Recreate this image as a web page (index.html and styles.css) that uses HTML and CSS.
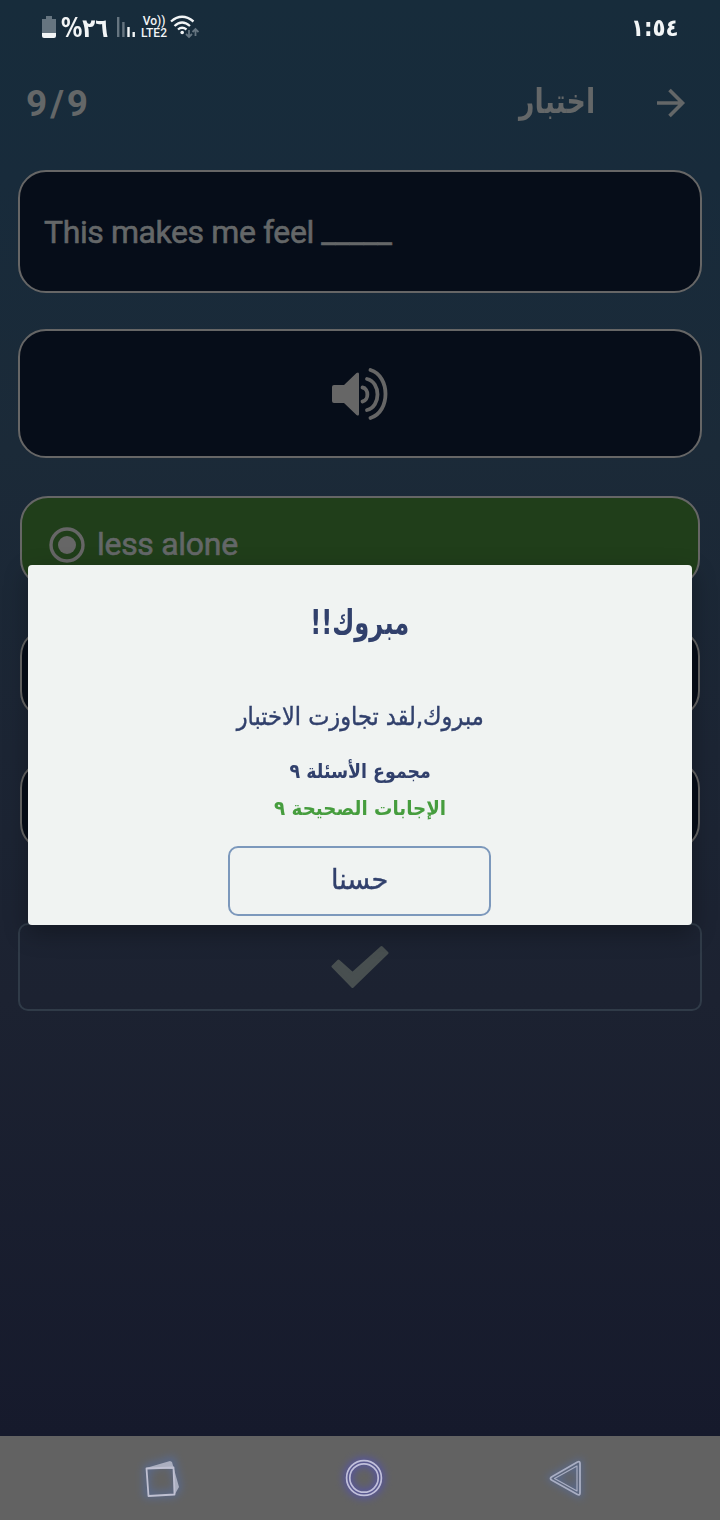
FILE: index.html
```html
<!DOCTYPE html>
<html lang="ar">
<head>
<meta charset="utf-8">
<title>اختبار</title>
<link rel="stylesheet" href="styles.css">
</head>
<body>
<div class="screen">
  <div class="status">
    <div class="status-left">
      <svg class="battery" width="14" height="22" viewBox="0 0 14 22"><path fill="#667580" d="M4 0h6v3h4v15H0V3h4z"/><path fill="#f2f5f6" d="M0 17h14v3q0 2-2 2H2q-2 0-2-2z"/></svg>
      <span class="percent"><span class="fit">%٢٦</span></span>
      <svg class="signal" width="19" height="21" viewBox="0 0 19 21"><path fill="#667580" d="M0 0h2.400v20H0zM5.200 5h2.400v15H5.200z"/><path fill="#f2f5f6" d="M10.300 10h2.400v10h-2.400zM15.500 15h2.400v5h-2.400z"/></svg>
      <span class="volte"><span>Vo))</span><span>LTE2</span></span>
      <svg class="wifi" width="29" height="24" viewBox="0 0 29 24"><g fill="none" stroke="#f2f5f6" stroke-width="2.300"><path d="M1 6.500Q12 -3 23.500 6.500"/><path d="M4.500 11Q12 4 20 11"/><path d="M8 14.500Q12 11 16.500 14.500"/></g><circle cx="12.200" cy="17.500" r="1.800" fill="#f2f5f6"/><path fill="none" stroke="#667580" stroke-width="1.800" d="M19 15v7M16 19l3 3 3-3M25.500 21v-7M22.500 17l3-3 3 3"/></svg>
    </div>
    <span class="time"><span class="fit">١:٥٤</span></span>
  </div>
  <div class="header">
    <span class="count">9/9</span>
    <span class="title"><span class="fit">اختبار</span></span>
    <svg class="arrow" width="30" height="30" viewBox="0 0 30 30"><path fill="none" stroke="#646768" stroke-width="3.600" d="M1 15h25M13.500 2l13 13-13 13"/></svg>
  </div>
  <div class="quiz">
    <div class="card question">This makes me feel _____</div>
    <div class="card sound">
      <svg width="56" height="52" viewBox="0 0 56 52"><path fill="#666" d="M2 17h10L24.500 5q2.500-1.500 2.500 1v40q0 2.500-2.500 1L12 35H2q-2 0-2-2V19q0-2 2-2z"/><g fill="none" stroke="#666" stroke-width="3.800" stroke-linecap="round"><path d="M30.500 19.500c6.500 1 6.500 13 0 14"/><path d="M35 11c14 3 14 28 0 31"/><path d="M38.500 2c20 6 20 42 0 48"/></g></svg>
    </div>
    <div class="options">
      <div class="option right">
        <svg width="36" height="36" viewBox="0 0 36 36"><circle cx="18" cy="18" r="16" fill="none" stroke="#666" stroke-width="3.400"/><circle cx="18" cy="18" r="9" fill="#666"/></svg>
        <span class="answer">less alone</span>
      </div>
      <div class="option"></div>
      <div class="option"></div>
    </div>
    <div class="submit">
      <svg width="58" height="44" viewBox="0 0 58 44"><path fill="#484f50" stroke="#484f50" stroke-width="3" stroke-linejoin="round" d="M2 21.500l5.500-5.500 14 12.500L50.500 2.500l5.500 5.500L21.500 41.500z"/></svg>
    </div>
  </div>
  <div class="nav">
    <svg class="recents" width="60" height="60" viewBox="0 0 60 60"><g class="glow"><path d="M17 20l25-8 6 27-4 7-27 1z"/></g><path fill="#aaaebf" d="M16 20l24-7 2 1 7 25-4 7-2-25z"/><path fill="none" stroke="#bfc0d2" stroke-width="1.800" stroke-linejoin="round" d="M16.500 20.500l27-1 1 27-26 1.500z"/></svg>
    <svg class="home" width="60" height="60" viewBox="0 0 60 60"><g class="glow home-glow"><circle cx="30" cy="30" r="16"/></g><g fill="none" stroke="#c0bfda"><circle cx="30" cy="30" r="17.400" stroke-width="1.700"/><circle cx="30" cy="30" r="14.200" stroke-width="1.700"/></g></svg>
    <svg class="back" width="60" height="60" viewBox="0 0 60 60"><g class="glow"><path d="M16 30l27-15v31z"/></g><g fill="none" stroke="#a9aec3" stroke-linejoin="round"><path stroke-width="1.800" d="M15.500 29q-2 1.500 0 3l26 14.500q2.500 1 2.500-1.500V15.500q0-2.500-2.500-1.500z"/><path stroke-width="1.200" d="M18.500 30.500L41 18v25z"/></g></svg>
  </div>
  <div class="dialog">
    <div class="d-title"><span class="fit" dir="rtl">مبروك!!</span></div>
    <div class="d-msg"><span class="fit" dir="rtl">مبروك,لقد تجاوزت الاختبار</span></div>
    <div class="d-total"><span class="fit" dir="rtl">مجموع الأسئلة ٩</span></div>
    <div class="d-correct"><span class="fit" dir="rtl">الإجابات الصحيحة ٩</span></div>
    <div class="d-ok"><span class="fit" dir="rtl">حسنا</span></div>
  </div>
</div>
</body>
</html>
```
FILE: styles.css
```css
* { box-sizing: border-box; }
body { margin: 0; }
svg { display: block; flex: none; }
.screen { position: relative; width: 720px; height: 1520px; overflow: hidden; display: flex; flex-direction: column; background: linear-gradient(#172c3b 0, #182b3b 180px, #1b2a38 450px, #1c2534 750px, #1c2231 1000px, #161a2c 1436px); font-family: Roboto, "Noto Sans", "DejaVu Sans", sans-serif; color: #646768; }
.fit { display: inline-block; white-space: nowrap; }
.status { height: 56px; padding: 0 41px 0 42px; display: flex; justify-content: space-between; align-items: center; color: #f2f5f6; font-family: "DejaVu Sans", sans-serif; font-weight: bold; direction: ltr; unicode-bidi: bidi-override; }
.status-left { display: flex; align-items: center; height: 54px; margin-bottom: 2px; }
.percent { width: 47px; margin-left: 5px; font-size: 26px; line-height: 30px; padding-top: 2px; display: flex; }
.percent .fit, .time .fit { direction: ltr; unicode-bidi: bidi-override; }
.percent .fit { transform: scaleX(.82); transform-origin: left; }
.signal { margin-left: 9px; }
.volte { width: 28px; margin-left: 4px; font: 500 12px/12px Roboto, sans-serif; text-align: center; display: flex; flex-direction: column; }
.wifi { margin-left: 2px; }
.time { width: 46px; font-size: 24px; display: flex; justify-content: flex-end; }
.time .fit { transform: scaleX(.89); transform-origin: right; }
.header { height: 94px; padding: 0 34px 0 26px; display: flex; align-items: center; }
.count { font-size: 37px; font-weight: 700; letter-spacing: 2.900px; flex: 1; }
.title { font: bold 34px/50px "DejaVu Sans", sans-serif; width: 76px; display: flex; justify-content: center; margin: 0 61px 4px 0; }
.title .fit { transform: scaleX(.79); }
.quiz { padding: 20px 18px 0; display: flex; flex-direction: column; }
.card { border: 2px solid #666; border-radius: 28px; background: #060d19; display: flex; align-items: center; }
.question { height: 123px; padding: 0 24px; font-size: 32px; letter-spacing: -.41px; -webkit-text-stroke: .6px #646768; }
.sound { height: 129px; margin-top: 36px; justify-content: center; }
.options { margin: 38px 2px 0; display: flex; flex-direction: column; gap: 41px; }
.option { height: 91px; border: 2px solid #666; border-radius: 28px; background: #060d19; }
.right { background: #203e1a; display: flex; align-items: center; gap: 12px; padding: 6px 27px 0; font-size: 32px; letter-spacing: -.3px; -webkit-text-stroke: .6px #646768; }
.answer { margin-bottom: 2px; }
.submit { height: 88px; margin-top: 72px; border: 2px solid #303b48; border-radius: 10px; display: flex; align-items: center; justify-content: center; }
.nav { height: 84px; margin-top: auto; background: #626262; display: flex; padding-left: 130px; }
.nav svg { margin-top: 12px; overflow: visible; }
.home { margin-left: 143.500px; }
.back { margin-left: 142.500px; }
.glow { fill: none; stroke: #536fae; stroke-width: 6px; filter: blur(4px); opacity: .65; }
.home-glow { stroke: #5250b8; stroke-width: 8px; opacity: .8; }
.dialog { position: absolute; left: 28px; top: 565px; width: 664px; height: 360px; border-radius: 4px; background: #f0f3f2; color: #31406c; display: flex; flex-direction: column; align-items: center; font-family: "DejaVu Sans", sans-serif; box-shadow: 0 8px 24px rgba(0,0,0,.3); }
.d-title { margin-top: 30px; height: 54px; font-size: 34px; line-height: 54px; font-weight: bold; }
.d-title .fit { transform: scaleX(.71); }
.d-msg { margin-top: 45px; height: 46px; font-size: 25px; line-height: 46px; -webkit-text-stroke: .4px #31406c; }
.d-msg .fit { transform: scaleX(.9); }
.d-total { margin-top: 13px; height: 37px; font-size: 20px; line-height: 36px; font-weight: bold; }
.d-total .fit { transform: scaleX(.87); }
.d-correct { height: 36px; font-size: 20px; line-height: 36px; font-weight: bold; color: #469d3e; }
.d-correct .fit { transform: scaleX(.915); }
.d-ok { margin: 20px 1px 0 0; width: 263px; height: 70px; border: 2px solid #7c98bc; border-radius: 10px; font-size: 28px; line-height: 64px; display: flex; justify-content: center; -webkit-text-stroke: .4px #31406c; }
.d-ok .fit { transform: scaleX(.97); }
```
